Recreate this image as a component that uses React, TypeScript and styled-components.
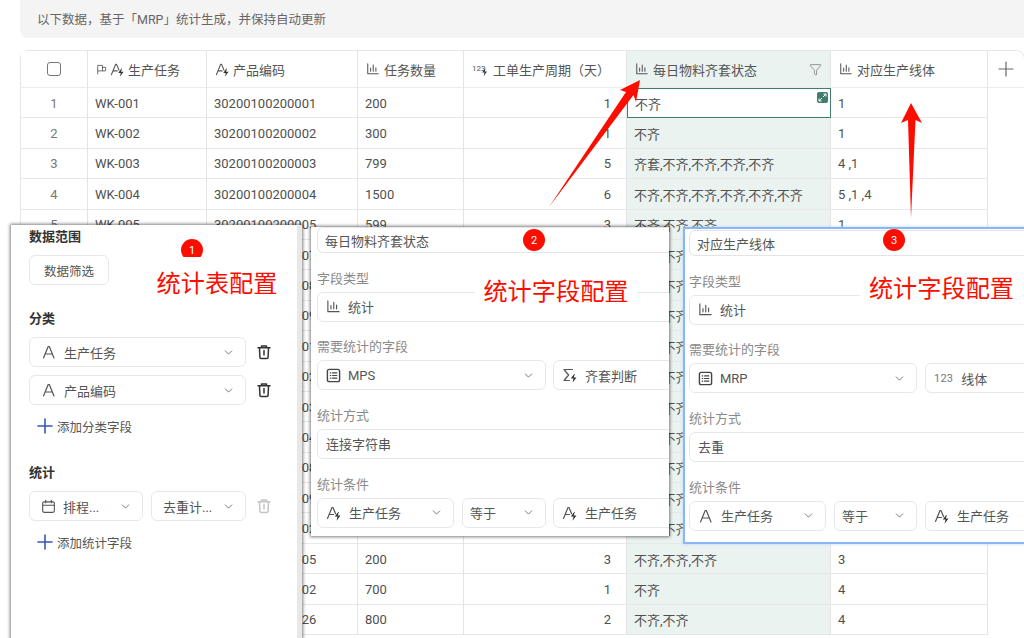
import React from 'react';
import styled, { createGlobalStyle } from 'styled-components';
import { ChevronDown, Funnel, Plus } from 'lucide-react';

const GlobalStyle = createGlobalStyle`
    html, body {
        margin: 0;
        padding: 0;
        background: #fff;
    }
    body {
        font-family: Roboto, "Noto Sans CJK SC", sans-serif;
        font-size: 13px;
        color: #505050;
    }
    * {
        box-sizing: border-box;
    }
`;

const Page = styled.div`
    position: relative;
    width: 1024px;
    height: 638px;
    overflow: hidden;
    padding-left: 20px;
`;

const Notice = styled.div`
    height: 38px;
    padding: 0 0 2px 17px;
    display: flex;
    align-items: center;
    background: #f4f4f5;
    border-bottom-left-radius: 8px;
    font-size: 12.5px;
    color: #666;
    margin-bottom: 12px;
`;

const Table = styled.div`
    display: grid;
    grid-template-columns: 67px 119px 151px 106px 163px 204px 157px 37px;
    grid-template-rows: 37px;
    grid-auto-rows: 30.4px;
    border-top: 1px solid #e6e6e8;
    border-left: 1px solid #e6e6e8;
    border-radius: 8px 8px 0 0;
`;

const HeadCell = styled.div<{ $stat?: boolean; $last?: boolean; $tight?: boolean }>`
    display: flex;
    align-items: center;
    gap: ${p => (p.$tight ? '3px' : '4px')};
    padding: 0 8px;
    background: ${p => (p.$stat ? '#ebf3f0' : '#fff')};
    border-right: 1px solid #e4e4e8;
    border-bottom: 1px solid #ececee;
    border-top-right-radius: ${p => (p.$last ? '8px' : '0')};
    color: #555;
    white-space: nowrap;
`;

const HeadCenter = styled(HeadCell)`
    justify-content: center;
    padding: 0;
`;

const HeadFilter = styled.span`
    margin-left: auto;
    display: flex;
    color: #666;
`;

const Checkbox = styled.span`
    width: 14px;
    height: 14px;
    border: 1px solid #777;
    border-radius: 3px;
`;

const Cell = styled.div<{ $align?: string; $stat?: boolean; $muted?: boolean }>`
    display: flex;
    align-items: center;
    justify-content: ${p => p.$align || 'flex-start'};
    padding: ${p => (p.$align === 'flex-end' ? '1px 15px 0 7px' : '1px 7px 0')};
    background: ${p => (p.$stat ? '#ebf3f0' : '#fff')};
    border-right: 1px solid #e4e4e8;
    border-bottom: 1px solid #e8e8ea;
    color: ${p => (p.$muted ? '#777' : '#505050')};
    white-space: nowrap;
    overflow: hidden;
`;

const ActiveCell = styled(Cell)`
    position: relative;
    background: #fff;
    border: 1px solid #3f7d6d;
    overflow: visible;
`;

const ExpandBadge = styled.span`
    position: absolute;
    top: 3px;
    right: 2px;
    width: 11px;
    height: 11px;
    border-radius: 2px;
    background: #3f7d6d;
    display: flex;
`;

const AddSpacer = styled.div``;

const Panel = styled.div<{ $x: number; $y: number; $w: number; $h: number }>`
    position: absolute;
    left: ${p => p.$x}px;
    top: ${p => p.$y}px;
    width: ${p => p.$w}px;
    height: ${p => p.$h}px;
    background: #fff;
    overflow: hidden;
    z-index: 3;
`;

const PanelFrame = styled.div<{ $x: number; $y: number; $w: number; $h: number; $blue?: boolean }>`
    position: absolute;
    left: ${p => p.$x}px;
    top: ${p => p.$y}px;
    width: ${p => p.$w}px;
    height: ${p => p.$h}px;
    z-index: 3;
    box-shadow: ${p => (p.$blue
        ? '0 0 0 2px #8ab6f6, 0 0 3px 2px #b8d4fa'
        : '0 0 3px 1px rgba(0, 0, 0, 0.5)')};
`;

const ConfigPanel = styled(Panel)`
    padding: 2px 0 0 18px;
    border-right: 5px solid #e8e8e8;
`;

const SectionTitle = styled.div<{ $first?: boolean }>`
    font-weight: 700;
    color: #333;
    line-height: 20px;
    margin: ${p => (p.$first ? '0' : '24px')} 0 8px;
`;

const FilterButton = styled.div`
    width: 80px;
    height: 30px;
    display: flex;
    align-items: center;
    justify-content: center;
    border: 1px solid #e8e8ea;
    border-radius: 6px;
    font-size: 12.5px;
    color: #555;
`;

const FieldRow = styled.div`
    display: flex;
    align-items: center;
    height: 30px;
    margin-bottom: 8px;
`;

const Select = styled.div<{ $w: number; $gap?: number; $pad?: number }>`
    flex: none;
    width: ${p => p.$w}px;
    height: 30px;
    margin-right: ${p => p.$gap ?? 0}px;
    padding: 0 10px 0 ${p => p.$pad ?? 8}px;
    display: flex;
    align-items: center;
    gap: 7px;
    border: 1px solid #e8e8ea;
    border-radius: 6px;
    color: #555;
    white-space: nowrap;
    overflow: hidden;
    background: #fff;
`;

const ChevronSlot = styled.span`
    margin-left: auto;
    display: flex;
    flex: none;
    color: #666;
`;

const DeleteSlot = styled.span<{ $off?: boolean }>`
    display: flex;
    margin-left: 10px;
    color: ${p => (p.$off ? '#c4c4c4' : '#333')};
`;

const AddLink = styled.div`
    display: flex;
    align-items: center;
    height: 20px;
    margin: 11px 0 27px 4px;
    font-size: 12.5px;
    color: #555;

    svg {
        color: #3558b8;
        flex: none;
    }
`;

const Form = styled.div<{ $pad: number; $top: number }>`
    width: 420px;
    padding: ${p => p.$top}px 0 0 ${p => p.$pad}px;
`;

const NameInput = styled.div`
    width: 400px;
    height: 26px;
    padding-left: 7px;
    display: flex;
    align-items: center;
    border: 1px solid #e4e4e6;
    border-radius: 6px;
    color: #555;
`;

const FormLabel = styled.div`
    height: 20px;
    line-height: 20px;
    margin: 15.67px 0 3px;
    color: #8a8a8a;
`;

const FormField = styled.div`
    width: 400px;
    height: 30px;
    padding-left: 8px;
    display: flex;
    align-items: center;
    gap: 7px;
    border: 1px solid #e8e8ea;
    border-radius: 6px;
    color: #555;
`;

const FormRow = styled.div`
    display: flex;
`;

const NumberMark = styled.span`
    font-size: 11px;
    color: #777;
    letter-spacing: 0.2px;
    margin-right: 1px;
`;

const Badge = styled.span<{ $x: number; $y: number }>`
    position: absolute;
    left: ${p => p.$x}px;
    top: ${p => p.$y}px;
    width: 22px;
    height: 22px;
    border-radius: 50%;
    background: #fb0d00;
    color: #fff;
    font-size: 11px;
    display: flex;
    align-items: center;
    justify-content: center;
`;

const Callout = styled.span<{ $x: number; $y: number; $w: number; $h: number }>`
    position: absolute;
    left: ${p => p.$x}px;
    top: ${p => p.$y}px;
    width: ${p => p.$w}px;
    height: ${p => p.$h}px;
    display: flex;
    align-items: center;
    justify-content: center;
    background: #fff;
    color: #fb0d00;
    font-size: 24.2px;
    white-space: nowrap;
`;

const ArrowLayer = styled.svg`
    position: absolute;
    left: 0;
    top: 0;
    z-index: 2;
`;

const Icon: React.FC<{ size?: number; children: React.ReactNode }> = ({ size = 16, children }) => (
    <svg width={size} height={size} viewBox="0 0 16 16" fill="none" stroke="currentColor"
        strokeWidth="1.2" strokeLinecap="round" strokeLinejoin="round" style={{ flex: 'none' }}>
        {children}
    </svg>
);

const Spark = () => <path d="M12.2 7 8.8 11.6h2.7l-1 4.2 4-5.4h-2.7l1-3.4z" fill="#333" stroke="none" />;

const TextIcon: React.FC<{ size?: number }> = ({ size = 16 }) => (
    <Icon size={size}><path d="M2.5 14 7.2 2.5h1.1L13 14M4.3 10h7" /></Icon>
);

const TextSparkIcon: React.FC<{ size?: number }> = ({ size = 16 }) => (
    <Icon size={size}><path d="M1.5 13.5 6 2.5h1l2.6 6.2M3.2 9.5h4.4" /><Spark /></Icon>
);

const FlagIcon = () => (
    <Icon size={11}><path d="M2.5 14.5V2h7v8h-7M9.5 5h4.5v5H9.5" /></Icon>
);

const ChartIcon: React.FC<{ size?: number }> = ({ size = 14 }) => (
    <Icon size={size}><path d="M2 2v11.5h12M5.3 10.5V7M8.3 10.5V3.5M11.3 10.5V6.5" /></Icon>
);

const NumberSparkIcon = () => (
    <svg width="17" height="16" viewBox="0 0 17 16" style={{ flex: 'none' }} fill="currentColor">
        <text x="0" y="10" fontSize="8" fontFamily="Roboto">123</text>
        <path d="M13 7.5 10.2 11.6h2.3l-.8 3.6 3.3-4.6h-2.3l.8-3.1z" fill="#333" />
    </svg>
);

const TableIcon = () => (
    <Icon size={15}>
        <rect x="1.5" y="1.5" width="13" height="13" rx="2" strokeWidth="1.5" stroke="#444" />
        <path d="M4.5 5.2h.6M7 5.2h4.5M4.5 8h.6M7 8h4.5M4.5 10.8h.6M7 10.8h4.5" strokeWidth="1.2" stroke="#444" />
    </Icon>
);

const SigmaSparkIcon = () => (
    <Icon><path d="M10.5 2.5H2l4.6 5.5L2 13.5h5.5" /><Spark /></Icon>
);

const CalendarIcon = () => (
    <Icon size={15}>
        <rect x="1.8" y="3" width="12.4" height="11.2" rx="1.6" />
        <path d="M1.8 6.6h12.4M5 1.5v2.6M11 1.5v2.6" />
    </Icon>
);

const TrashIcon = () => (
    <Icon>
        <path d="M2 3.8h12M5.5 3.5V1.9h5v1.6M3.5 4l.4 9.3c0 .8.5 1.2 1.3 1.2h5.6c.8 0 1.3-.4 1.3-1.2l.4-9.3M8 6.5v4.5" strokeWidth="1.5" />
    </Icon>
);

const ExpandIcon = () => (
    <svg width="11" height="11" viewBox="0 0 11 11" fill="none" stroke="#fff" strokeWidth="1">
        <path d="M6 5 9 2M6.5 2H9v2.5M5 6 2 9M2 6.5V9h2.5" />
    </svg>
);

const Chevron = () => <ChevronSlot><ChevronDown size={13} strokeWidth={1.6} /></ChevronSlot>;

const AddIcon = () => <Plus size={24} strokeWidth={1.6} />;

type Row = { n: number; task: string; code: string; qty: string; days: string; status: string; line: string };

const row = (n: number, task: string, code: string, qty: string, days: string, status: string, line: string): Row =>
    ({ n, task, code, qty, days, status, line });

// rows 6-15 sit behind the config panels, only the tail of code and status shows
const rows: Row[] = [
    row(1, 'WK-001', '30200100200001', '200', '1', '不齐', '1'),
    row(2, 'WK-002', '30200100200002', '300', '1', '不齐', '1'),
    row(3, 'WK-003', '30200100200003', '799', '5', '齐套,不齐,不齐,不齐,不齐', '4 ,1'),
    row(4, 'WK-004', '30200100200004', '1500', '6', '不齐,不齐,不齐,不齐,不齐,不齐', '5 ,1 ,4'),
    row(5, 'WK-005', '30200100200005', '599', '3', '不齐,不齐,不齐', '1'),
    row(6, 'WK-006', '30200100200007', '300', '1', '不齐,不齐,不齐', '1'),
    row(7, 'WK-007', '30200100200008', '300', '1', '不齐,不齐,不齐', '1'),
    row(8, 'WK-008', '30200100200009', '300', '1', '不齐,不齐,不齐', '1'),
    row(9, 'WK-009', '30200100200101', '300', '1', '不齐,不齐,不齐', '1'),
    row(10, 'WK-010', '30200100200102', '300', '1', '不齐,不齐,不齐', '1'),
    row(11, 'WK-011', '30200100200103', '300', '1', '不齐,不齐,不齐', '1'),
    row(12, 'WK-012', '30200100200104', '300', '1', '不齐,不齐,不齐', '1'),
    row(13, 'WK-013', '30200100200108', '300', '1', '不齐,不齐,不齐', '1'),
    row(14, 'WK-014', '30200100200109', '300', '1', '不齐,不齐,不齐', '1'),
    row(15, 'WK-015', '30200100200202', '300', '1', '不齐,不齐,不齐', '1'),
    row(16, 'WK-016', '30200100200205', '200', '3', '不齐,不齐,不齐', '3'),
    row(17, 'WK-017', '30200100200302', '700', '1', '不齐', '4'),
    row(18, 'WK-018', '30200100200326', '800', '2', '不齐,不齐', '4'),
];

function App() {
    return (
        <Page>
            <GlobalStyle />
            <Notice>以下数据，基于「MRP」统计生成，并保持自动更新</Notice>
            <Table>
                <HeadCenter><Checkbox /></HeadCenter>
                <HeadCell $tight><FlagIcon /><TextSparkIcon size={15} />生产任务</HeadCell>
                <HeadCell $tight><TextSparkIcon size={15} />产品编码</HeadCell>
                <HeadCell><ChartIcon />任务数量</HeadCell>
                <HeadCell><NumberSparkIcon />工单生产周期（天）</HeadCell>
                <HeadCell $stat><ChartIcon />每日物料齐套状态<HeadFilter><Funnel size={13} strokeWidth={1.2} /></HeadFilter></HeadCell>
                <HeadCell><ChartIcon />对应生产线体</HeadCell>
                <HeadCenter $last><Plus size={24} strokeWidth={1.2} color="#666" /></HeadCenter>
                {rows.map(r => (
                    <React.Fragment key={r.n}>
                        <Cell $align="center" $muted>{r.n}</Cell>
                        <Cell>{r.task}</Cell>
                        <Cell>{r.code}</Cell>
                        <Cell>{r.qty}</Cell>
                        <Cell $align="flex-end">{r.days}</Cell>
                        {r.n === 1
                            ? <ActiveCell>{r.status}<ExpandBadge><ExpandIcon /></ExpandBadge></ActiveCell>
                            : <Cell $stat>{r.status}</Cell>}
                        <Cell>{r.line}</Cell>
                        <AddSpacer />
                    </React.Fragment>
                ))}
            </Table>

            <ArrowLayer width="1024" height="638" viewBox="0 0 1024 638">
                <polygon fill="#fb0d00" points="549,207 626,92 620,90 640,80 636,102 633.5,95" />
                <polygon fill="#fb0d00" points="911,218 908,120 901,123 911,103 922,123 915.5,120" />
            </ArrowLayer>

            <PanelFrame $x={11} $y={225} $w={291} $h={420} />
            <ConfigPanel $x={11} $y={225} $w={291} $h={420}>
                <SectionTitle $first>数据范围</SectionTitle>
                <FilterButton>数据筛选</FilterButton>
                <SectionTitle>分类</SectionTitle>
                <FieldRow>
                    <Select $w={217} $pad={11}><TextIcon />生产任务<Chevron /></Select>
                    <DeleteSlot><TrashIcon /></DeleteSlot>
                </FieldRow>
                <FieldRow>
                    <Select $w={217} $pad={11}><TextIcon />产品编码<Chevron /></Select>
                    <DeleteSlot><TrashIcon /></DeleteSlot>
                </FieldRow>
                <AddLink><AddIcon />添加分类字段</AddLink>
                <SectionTitle>统计</SectionTitle>
                <FieldRow>
                    <Select $w={114} $gap={8} $pad={11}><CalendarIcon />排程...<Chevron /></Select>
                    <Select $w={95} $pad={11}>去重计...<Chevron /></Select>
                    <DeleteSlot $off><TrashIcon /></DeleteSlot>
                </FieldRow>
                <AddLink><AddIcon />添加统计字段</AddLink>
                <Badge $x={170} $y={14}>1</Badge>
                <Callout $x={137} $y={32} $w={138} $h={48}>统计表配置</Callout>
            </ConfigPanel>

            <PanelFrame $x={311} $y={227} $w={358} $h={309} />
            <Panel $x={311} $y={227} $w={358} $h={309}>
                <Form $pad={6} $top={0}>
                    <NameInput>每日物料齐套状态</NameInput>
                    <FormLabel>字段类型</FormLabel>
                    <FormField><ChartIcon size={15} />统计</FormField>
                    <FormLabel>需要统计的字段</FormLabel>
                    <FormRow>
                        <Select $w={229} $gap={7}><TableIcon />MPS<Chevron /></Select>
                        <Select $w={140}><SigmaSparkIcon />齐套判断</Select>
                    </FormRow>
                    <FormLabel>统计方式</FormLabel>
                    <FormField>连接字符串</FormField>
                    <FormLabel>统计条件</FormLabel>
                    <FormRow>
                        <Select $w={137} $gap={8}><TextSparkIcon />生产任务<Chevron /></Select>
                        <Select $w={84} $gap={7} $pad={7}>等于<Chevron /></Select>
                        <Select $w={140}><TextSparkIcon />生产任务</Select>
                    </FormRow>
                </Form>
                <Badge $x={212} $y={2}>2</Badge>
                <Callout $x={164} $y={44} $w={162} $h={36}>统计字段配置</Callout>
            </Panel>

            <PanelFrame $x={685} $y={229} $w={339} $h={313} $blue />
            <Panel $x={685} $y={229} $w={339} $h={313}>
                <Form $pad={4} $top={1}>
                    <NameInput>对应生产线体</NameInput>
                    <FormLabel>字段类型</FormLabel>
                    <FormField><ChartIcon size={15} />统计</FormField>
                    <FormLabel>需要统计的字段</FormLabel>
                    <FormRow>
                        <Select $w={228} $gap={8}><TableIcon />MRP<Chevron /></Select>
                        <Select $w={140}><NumberMark>123</NumberMark>线体</Select>
                    </FormRow>
                    <FormLabel>统计方式</FormLabel>
                    <FormField>去重</FormField>
                    <FormLabel>统计条件</FormLabel>
                    <FormRow>
                        <Select $w={137} $gap={8}><TextIcon />生产任务<Chevron /></Select>
                        <Select $w={83} $gap={8} $pad={7}>等于<Chevron /></Select>
                        <Select $w={140}><TextSparkIcon />生产任务</Select>
                    </FormRow>
                </Form>
                <Badge $x={198} $y={0}>3</Badge>
                <Callout $x={175} $y={39} $w={163} $h={36}>统计字段配置</Callout>
            </Panel>
        </Page>
    );
}

export default App;
